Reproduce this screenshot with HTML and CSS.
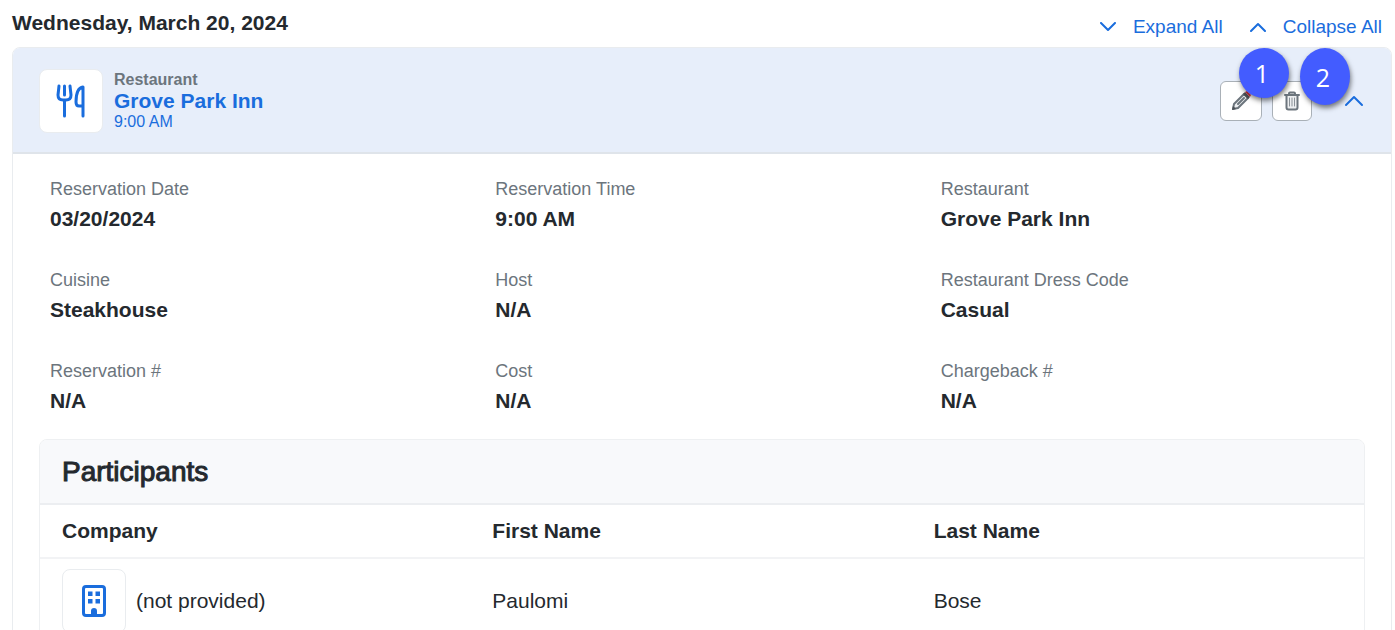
FILE: index.html
```html
<!DOCTYPE html>
<html lang="en">

<head>
    <meta charset="utf-8">
    <meta name="viewport" content="width=device-width, initial-scale=1.0">
    <title>Itinerary</title>
    <link rel="stylesheet" href="styles.css">
</head>

<body>
    <main class="itinerary">
        <header class="day">
            <h2 class="day-title">Wednesday, March 20, 2024</h2>
            <div class="day-actions">
                <button type="button" class="link-button">
                    <svg width="16" height="10" viewBox="0 0 16 10"><path d="M1 1l7 7 7-7" /></svg>
                    Expand All
                </button>
                <button type="button" class="link-button">
                    <svg width="16" height="10" viewBox="0 0 16 10"><path d="M1 9l7-7 7 7" /></svg>
                    Collapse All
                </button>
            </div>
        </header>

        <article class="card">
            <header class="card-header">
                <span class="icon-box">
                    <svg class="fork" width="30" height="34" viewBox="0 0 30 34">
                        <path d="M3 2L2 11q0 5 5 5h3q5 0 5-5L14 2M8.500 2v9M8.500 16v16M27 32V3q-7 1-7 15 0 4 3 4h4" />
                    </svg>
                </span>
                <div class="summary">
                    <span class="summary-type">Restaurant</span>
                    <a href="#details" class="summary-name">Grove Park Inn</a>
                    <span class="summary-time">9:00 AM</span>
                </div>
                <div class="card-actions">
                    <div class="action">
                        <button type="button" class="icon-button edit" aria-label="Edit">
                            <svg width="22" height="22" viewBox="0 0 22 22">
                                <path class="pencil" d="M3 19l1-5L14 4l4 4L8 18zM8 14l6-6" />
                                <path class="lead" d="M2 20l1-4 3 3z" />
                                <path class="ferrule" d="M13 4l2-2 5 5-2 2z" />
                                <path class="rubber" d="M15 2l2-1 4 4-1 2z" />
                            </svg>
                        </button>
                        <span class="badge badge-edit">1</span>
                    </div>
                    <div class="action">
                        <button type="button" class="icon-button" aria-label="Delete">
                            <svg width="18" height="20" viewBox="0 0 18 20">
                                <path class="bin" d="M2 4h14M6 4V2.500q0-1 1-1h4q1 0 1 1V4M3.500 4v12.500q0 2 2 2h7q2 0 2-2V4" />
                                <path class="bars" d="M6.500 7v8M9 7v8M11.500 7v8" />
                            </svg>
                        </button>
                        <span class="badge badge-delete">2</span>
                    </div>
                    <button type="button" class="toggle" aria-label="Collapse">
                        <svg width="20" height="12" viewBox="0 0 20 12"><path d="M2 10l8-8 8 8" /></svg>
                    </button>
                </div>
            </header>

            <dl class="details" id="details">
                <div class="detail">
                    <dt>Reservation Date</dt>
                    <dd>03/20/2024</dd>
                </div>
                <div class="detail">
                    <dt>Reservation Time</dt>
                    <dd>9:00 AM</dd>
                </div>
                <div class="detail">
                    <dt>Restaurant</dt>
                    <dd>Grove Park Inn</dd>
                </div>
                <div class="detail">
                    <dt>Cuisine</dt>
                    <dd>Steakhouse</dd>
                </div>
                <div class="detail">
                    <dt>Host</dt>
                    <dd>N/A</dd>
                </div>
                <div class="detail">
                    <dt>Restaurant Dress Code</dt>
                    <dd>Casual</dd>
                </div>
                <div class="detail">
                    <dt>Reservation #</dt>
                    <dd>N/A</dd>
                </div>
                <div class="detail">
                    <dt>Cost</dt>
                    <dd>N/A</dd>
                </div>
                <div class="detail">
                    <dt>Chargeback #</dt>
                    <dd>N/A</dd>
                </div>
            </dl>

            <section class="participants">
                <h3 class="participants-title">Participants</h3>
                <table class="participants-table">
                    <thead>
                        <tr>
                            <th>Company</th>
                            <th>First Name</th>
                            <th>Last Name</th>
                        </tr>
                    </thead>
                    <tbody>
                        <tr>
                            <td>
                                <div class="company">
                                    <span class="icon-box">
                                        <svg class="building" width="26" height="32" viewBox="0 0 26 32">
                                            <rect class="wall" x="2.500" y="1.500" width="21" height="29" rx="2.500" />
                                            <path d="M7 6.500h4.500v4.500H7zM14.500 6.500H19v4.500h-4.500zM7 14h4.500v4.500H7zM14.500 14H19v4.500h-4.500zM10 30v-4q0-3 3-3t3 3v4z" />
                                        </svg>
                                    </span>
                                    (not provided)
                                </div>
                            </td>
                            <td>Paulomi</td>
                            <td>Bose</td>
                        </tr>
                    </tbody>
                </table>
            </section>
        </article>
    </main>
</body>

</html>
```
FILE: styles.css
```css
* {
    box-sizing: border-box;
}

html {
    overflow: hidden;
}

body {
    margin: 0;
    background: #fff;
    color: #24292e;
    font-family: "Liberation Sans", Arial, Helvetica, sans-serif;
    font-size: 21px;
    line-height: 24px;
}

button {
    padding: 0;
    border: 0;
    background: none;
    font: inherit;
    cursor: pointer;
}

svg {
    display: block;
    fill: none;
    stroke: #1a6ddd;
    stroke-width: 2;
    stroke-linecap: round;
    stroke-linejoin: round;
}

.itinerary {
    padding: 11px 3px 0 12px;
}

.day {
    display: flex;
    justify-content: space-between;
    height: 36px;
    padding-right: 10px;
}

.day-title {
    margin: 0;
    font-size: 21px;
}

.day-actions {
    display: flex;
    align-items: center;
    gap: 27px;
    padding-bottom: 4px;
}

.link-button {
    display: flex;
    align-items: center;
    gap: 17px;
    color: #1a6ddd;
    font-size: 19px;
}

.card {
    border: 1px solid #e9ecef;
    border-radius: 8px;
}

.card-header {
    display: flex;
    align-items: center;
    height: 106px;
    padding: 2px 27px 0 26px;
    background: #e7eefa;
    border-bottom: 2px solid #dfe4ea;
    border-radius: 7px 7px 0 0;
}

.icon-box {
    display: flex;
    align-items: center;
    justify-content: center;
    width: 64px;
    height: 64px;
    background: #fff;
    border: 1px solid #e9ecef;
    border-radius: 8px;
}

.fork {
    stroke-width: 3;
}

.summary {
    display: flex;
    flex-direction: column;
    padding-left: 11px;
}

.summary-type {
    color: #6c757d;
    font-size: 16px;
    font-weight: bold;
    line-height: 18px;
}

.summary-name {
    color: #1a6ddd;
    font-weight: bold;
    text-decoration: none;
}

.summary-time {
    color: #1a6ddd;
    font-size: 16px;
    line-height: 18px;
}

.card-actions {
    display: flex;
    align-items: center;
    gap: 10px;
    margin-left: auto;
}

.action {
    position: relative;
}

.icon-button {
    display: flex;
    align-items: center;
    justify-content: center;
    width: 40px;
    height: 40px;
    background: #fff;
    border: 1px solid #a9b0b7;
    border-radius: 6px;
}

.edit {
    width: 42px;
}

.pencil,
.bin {
    fill: #eceef0;
    stroke: #6c757d;
}

.bars {
    stroke: #8a9198;
    stroke-width: 1;
}

.lead,
.ferrule {
    fill: #4c5157;
    stroke: none;
}

.rubber {
    fill: #d63649;
    stroke: none;
}

.badge {
    position: absolute;
    display: flex;
    align-items: center;
    justify-content: center;
    z-index: 1;
    width: 50px;
    padding-right: 4px;
    background: #435cff;
    border-radius: 50%;
    box-shadow: 1px 3px 5px rgba(0, 0, 0, 0.5);
    color: #fff;
    font-family: "Open Sans", sans-serif;
    font-size: 25px;
}

.badge-edit {
    top: -33px;
    left: 19px;
    height: 50px;
}

.badge-delete {
    top: -33px;
    left: 28px;
    height: 57px;
}

.toggle {
    margin-left: 22px;
}

.details {
    display: grid;
    grid-template-columns: repeat(3, 1fr);
    row-gap: 31px;
    margin: 0;
    padding: 23px 21px 20px;
}

.detail {
    padding: 0 16px;
}

.detail dt {
    color: #6c757d;
    font-size: 18px;
}

.detail dd {
    margin: 0;
    padding: 6px 0;
    font-weight: bold;
}

.participants {
    margin: 0 26px 26px;
    border: 1px solid #eef0f2;
    border-radius: 8px;
}

.participants-title {
    margin: 0;
    padding: 16px 22px;
    background: #f8f9fb;
    border-bottom: 2px solid #eceef1;
    border-radius: 7px 7px 0 0;
    font-size: 28px;
    font-weight: normal;
    line-height: 31px;
    -webkit-text-stroke: 1px;
}

.participants-table {
    width: 100%;
    border-collapse: collapse;
    table-layout: fixed;
}

.participants-table th {
    padding: 14px 11px;
    border-bottom: 2px solid #f2f3f5;
    text-align: left;
}

.participants-table td {
    padding: 10px 11px;
}

.participants-table th:first-child,
.participants-table td:first-child {
    padding-left: 22px;
}

.company {
    display: flex;
    align-items: center;
    gap: 10px;
}

.building {
    fill: #1a6ddd;
    stroke: none;
}

.wall {
    fill: none;
    stroke: #1a6ddd;
    stroke-width: 3;
}
```
